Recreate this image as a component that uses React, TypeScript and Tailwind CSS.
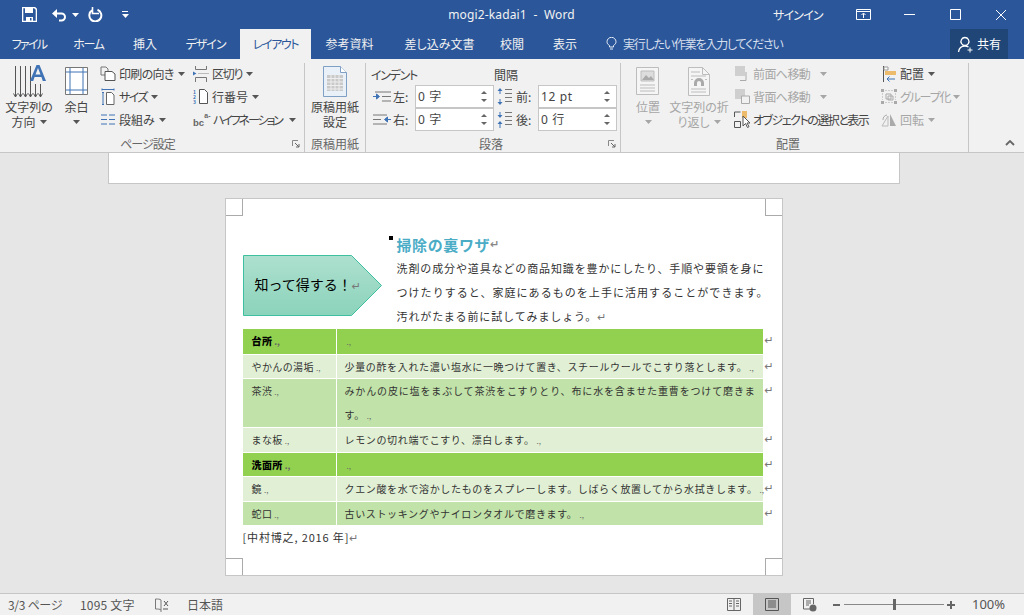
import type { ReactNode } from "react";

const BLUE = "#2b579a";
const ICON_BLUE = "#3f73b5";
const GRAY = "#7a7a7a";
const DIM = "#bdbdbd";

function Caret({ color = "#555", className = "" }: { color?: string; className?: string }) {
  return (
    <svg width="7" height="4" viewBox="0 0 7 4" className={className}>
      <path d="M0 0h7L3.5 4z" fill={color} />
    </svg>
  );
}

function Mark({ className = "" }: { className?: string }) {
  return (
    <span className={`font-['DejaVu_Sans'] text-[11px] leading-none tracking-normal text-[#777] [font-feature-settings:normal] ${className}`}>↵</span>
  );
}

function CellEnd() {
  return <span className="ml-[2px] text-[8px] leading-none tracking-normal text-[#666]">.,</span>;
}

function BigButton({
  width,
  icon,
  lines,
  caret,
  disabled,
}: {
  width: string;
  icon: ReactNode;
  lines: ReactNode[];
  caret?: boolean;
  disabled?: boolean;
}) {
  return (
    <div
      className={`flex shrink-0 flex-col items-center ${width} ${disabled ? "text-[#a6a6a6]" : "text-[#444]"}`}
    >
      <div className="flex h-[36px] items-center justify-center">{icon}</div>
      {lines.map((l, i) => (
        <div key={i} className="flex h-[15px] items-center gap-[4px] whitespace-nowrap text-[12px] leading-[15px]">
          {l}
        </div>
      ))}
      {caret && <Caret color={disabled ? "#a6a6a6" : "#555"} className="mt-[6px]" />}
    </div>
  );
}

function SmallButton({
  icon,
  label,
  caret,
  disabled,
  caretGap = "ml-[1px]",
  tracking = "",
}: {
  icon: ReactNode;
  label: string;
  caret?: boolean;
  disabled?: boolean;
  caretGap?: string;
  tracking?: string;
}) {
  return (
    <div
      className={`flex h-[23px] items-center gap-[3px] whitespace-nowrap text-[12px] ${disabled ? "text-[#a6a6a6]" : "text-[#444]"}`}
    >
      <div className="flex w-[16px] shrink-0 items-center justify-center">{icon}</div>
      <span className={tracking}>{label}</span>
      {caret && <Caret color={disabled ? "#a6a6a6" : "#555"} className={caretGap} />}
    </div>
  );
}

function Launcher() {
  return (
    <svg width="8" height="8" viewBox="0 0 8 8" className="shrink-0">
      <path d="M.5 6V.5H6" fill="none" stroke="#888" />
      <path d="M3 3l4 4M7 4v3H4" fill="none" stroke="#666" />
    </svg>
  );
}

function Group({
  width,
  label,
  launcher,
  children,
  labelClass = "",
}: {
  width: string;
  label: string;
  launcher?: boolean;
  children: ReactNode;
  labelClass?: string;
}) {
  return (
    <div className={`flex h-[89px] shrink-0 flex-col border-r border-[#c6c6c6] ${width}`}>
      <div className="flex h-[73px] min-h-0">{children}</div>
      <div className={`flex h-[16px] items-center text-[12px] leading-none text-[#666] ${labelClass}`}>
        <span className="flex-1 text-center">{label}</span>
        {launcher && <div className="mr-[4px]"><Launcher /></div>}
      </div>
    </div>
  );
}

function Spinner({ value }: { value: string }) {
  return (
    <div className="flex h-[23px] w-[79px] items-center justify-between border border-[#c6c6c6] bg-white pl-[2px] pr-[6px] text-[12px] tracking-[0.6px] text-[#444] [font-feature-settings:normal]">
      <span className="font-['Noto_Sans','Noto_Sans_CJK_JP',sans-serif]">{value}</span>
      <div className="flex flex-col gap-[5px]">
        <svg width="6" height="3" viewBox="0 0 6 3"><path d="M0 3h6L3 0z" fill="#666" /></svg>
        <svg width="6" height="3" viewBox="0 0 6 3"><path d="M0 0h6L3 3z" fill="#666" /></svg>
      </div>
    </div>
  );
}

const Lines3 = () => (
  <g stroke="#777">
    <path d="M8 1.500h7M8 5.500h7M8 9.500h7" />
  </g>
);

function Row({
  bg,
  h,
  first,
  second,
  bold,
}: {
  bg: string;
  h: string;
  first: string;
  second?: ReactNode;
  bold?: boolean;
}) {
  return (
    <div className={`flex ${h} gap-[1px]`}>
      <div className={`w-[93px] shrink-0 pl-[9px] pt-[4px] text-[10px] leading-[16px] tracking-[0.4px] text-[#333] ${bg} ${bold ? "font-black text-black" : ""}`}>
        {first}
        <CellEnd />
      </div>
      <div className={`w-[426px] shrink-0 pl-[8px] pt-[4px] text-[10px] leading-[16px] tracking-[0.65px] text-[#333] ${bg}`}>
        {second}
        <CellEnd />
      </div>
      <div className="flex w-[12px] shrink-0 pl-[1px] pt-[6px]"><Mark /></div>
    </div>
  );
}

function Corner({ className }: { className: string }) {
  return <div className={`absolute h-[17px] w-[17px] border-[#aaa] ${className}`} />;
}

export default function App() {
  return (
    <div className="flex h-[615px] w-[1024px] flex-col overflow-hidden bg-[#e6e6e6] font-['Noto_Sans_CJK_JP','Noto_Sans',sans-serif]">
      {/* title bar */}
      <div className="flex h-[29px] shrink-0 items-center text-white [font-feature-settings:'palt']" style={{ backgroundColor: BLUE }}>
        <div className="flex w-[260px] items-center pl-[22px]">
          <svg width="15" height="15" viewBox="0 0 15 15">
            <path d="M.5.5h12l2 2v12H.5z" fill="none" stroke="#fff" strokeWidth="1.600" />
            <path d="M3 1h8v5H3zM4 10h7v4H4z" fill="#fff" />
            <path d="M8 11h1.500v2.500H8z" fill={BLUE} />
          </svg>
          <svg width="16" height="14" viewBox="0 0 16 14" className="ml-[14px]">
            <path d="M3 5.500h7.500a3.500 3.500 0 0 1 0 7H8" fill="none" stroke="#fff" strokeWidth="2" />
            <path d="M1 5.500L6 1v9z" fill="#fff" />
          </svg>
          <Caret color="#fff" className="ml-[5px]" />
          <svg width="15" height="15" viewBox="0 0 15 15" className="ml-[9px]">
            <path d="M9.500 2.800A6 6 0 1 1 4 3.400" fill="none" stroke="#fff" strokeWidth="2" />
            <path d="M4.500 0v6.500H11" fill="none" stroke="#fff" strokeWidth="1.600" />
          </svg>
          <svg width="7" height="7" viewBox="0 0 7 7" className="ml-[19px]">
            <path d="M0 0h6v1H0zM0 3h7L3.500 7z" fill="#fff" />
          </svg>
        </div>
        <div className="w-[503px] whitespace-pre text-center font-['Noto_Sans','Noto_Sans_CJK_JP',sans-serif] text-[12px] tracking-[0.15px] text-[#f2f2f2]">
          mogi2-kadai1  -  Word
        </div>
        <div className="ml-[10px] w-[53px] whitespace-nowrap text-[12px] tracking-[-0.8px] text-[#f2f2f2]">サインイン</div>
        <div className="flex flex-1 items-center">
          <svg width="15" height="11" viewBox="0 0 15 11" className="ml-[30px]">
            <path d="M.5.5h14v10H.5zM1 2.500h13" fill="none" stroke="#fff" />
            <path d="M7.500 9V4.500M5.500 6l2-2 2 2" fill="none" stroke="#fff" />
          </svg>
          <svg width="11" height="1" viewBox="0 0 11 1" className="ml-[33px]"><path d="M0 0h11v1H0z" fill="#fff" /></svg>
          <svg width="11" height="11" viewBox="0 0 11 11" className="ml-[35px]">
            <path d="M.5.5h10v10H.5z" fill="none" stroke="#fff" />
          </svg>
          <svg width="12" height="12" viewBox="0 0 12 12" className="ml-[34px]">
            <path d="M1 1l10 10M11 1L1 11" fill="none" stroke="#fff" />
          </svg>
        </div>
      </div>

      {/* tabs */}
      <div className="flex h-[30px] shrink-0 items-stretch text-[12px] text-[#f1f1f1] [font-feature-settings:'palt']" style={{ backgroundColor: BLUE }}>
        <div className="flex w-[58px] items-center justify-center tracking-[-1.7px]">ファイル</div>
        <div className="flex w-[61px] items-center justify-center tracking-[-1.3px]">ホーム</div>
        <div className="flex w-[52px] items-center justify-center">挿入</div>
        <div className="flex w-[69px] items-center justify-center tracking-[-1px]">デザイン</div>
        <div className="flex w-[71px] items-center justify-center bg-[#f1f1f1] tracking-[-1.4px] text-[#2b579a]">レイアウト</div>
        <div className="flex w-[77px] items-center justify-center">参考資料</div>
        <div className="flex w-[103px] items-center justify-center">差し込み文書</div>
        <div className="flex w-[42px] items-center justify-center">校閲</div>
        <div className="flex w-[64px] items-center justify-center">表示</div>
        <div className="flex w-[353px] items-center pl-[9px] tracking-[-1.200px] text-[#d5deec]">
          <svg width="11" height="14" viewBox="0 0 11 14" className="mr-[6px]">
            <path d="M3.500 10V8.500C1.800 7.500 1 6.200 1 4.800a4.500 4.500 0 0 1 9 0c0 1.400-.8 2.700-2.500 3.700V10zM4 12h3" fill="none" stroke="#e6ecf5" />
          </svg>
          実行したい作業を入力してください
        </div>
        <div className="flex w-[58px] items-center justify-center gap-[3px] bg-[#1f4677] text-white">
          <svg width="17" height="17" viewBox="0 0 17 17">
            <path d="M8 9.500a4 4 0 1 0-.1 0zM1.500 16c.5-3.500 3-6 6.500-6 1.500 0 2.500.4 3.500 1" fill="none" stroke="#fff" strokeWidth="1.300" />
            <path d="M13 11.500v5M10.500 14h5" stroke="#fff" />
          </svg>
          共有
        </div>
        <div className="flex-1" />
      </div>

      {/* ribbon */}
      <div className="flex h-[94px] shrink-0 border-b border-[#c6c6c6] bg-[#f1f1f1] pt-[4px] [font-feature-settings:'palt']">
        <Group width="w-[305px]" label="ページ設定" launcher labelClass="pl-[3px] tracking-[-1px]">
          <div className="flex w-full">
            <BigButton
              width="w-[57px] pl-[1px]"
              lines={["文字列の", <>方向<Caret /></>]}
              icon={
                <svg width="33" height="33" viewBox="0 0 33 33">
                  <g stroke="#555" fill="none">
                    <path d="M2.500 1v31M7.500 1v31M12.500 1v31M17.500 1v31M22.500 19v13M27.500 19v13" />
                    <path d="M.5 28.500l2 3.500 2-3.500M5.500 28.500l2 3.500 2-3.500M10.500 28.500l2 3.500 2-3.500M15.500 28.500l2 3.500 2-3.500M20.500 28.500l2 3.500 2-3.500M25.500 28.500l2 3.500 2-3.500" />
                  </g>
                  <path d="M17 16L23.500 0h3L33 16h-3.200l-1.400-4h-6.800l-1.400 4zM22.500 9.500h5L25 3z" fill={ICON_BLUE} fillRule="evenodd" />
                </svg>
              }
            />
            <BigButton
              width="ml-[3px] w-[33px]"
              lines={["余白"]}
              caret
              icon={
                <svg width="24" height="28" viewBox="0 0 24 28">
                  <path d="M.5.5h22v27H.5z" fill="#fff" stroke="#777" />
                  <path d="M5 1v26M18 1v26M1 5h21M1 23h21" stroke={ICON_BLUE} fill="none" />
                </svg>
              }
            />
            <div className="ml-[7px] mt-[-1px] flex w-[93px] shrink-0 flex-col">
              <SmallButton
                label="印刷の向き"
                caret
                tracking="tracking-[-0.7px]"
                icon={
                  <svg width="16" height="15" viewBox="0 0 16 15">
                    <path d="M7 9H1V1h5l2 2v2" fill="none" stroke="#777" />
                    <path d="M5 5.500h7l3 2.500v6.500H5z" fill="#fff" stroke="#555" />
                  </svg>
                }
              />
              <SmallButton
                label="サイズ"
                caret
                tracking="tracking-[-1.6px]"
                icon={
                  <svg width="14" height="17" viewBox="0 0 14 17">
                    <path d="M1 1.500h12M1 .5v2M13 .5v2M2 4.500v12M1 4.500h2M1 16.500h2" stroke={ICON_BLUE} fill="none" />
                    <path d="M5.500 4.500h5l2.500 2.500v9.500H5.500z" fill="#fff" stroke="#666" />
                  </svg>
                }
              />
              <SmallButton
                label="段組み"
                caret
                icon={
                  <svg width="14" height="11" viewBox="0 0 14 11">
                    <path d="M0 1h6M8 1h6M0 5.500h6M8 5.500h6M0 10h6M8 10h6" stroke={ICON_BLUE} fill="none" />
                  </svg>
                }
              />
            </div>
            <div className="mt-[-1px] flex flex-col">
              <SmallButton
                label="区切り"
                caret
                tracking="tracking-[-1.2px]"
                icon={
                  <svg width="16" height="16" viewBox="0 0 16 16">
                    <path d="M2.500 0v3.500h11V0M2.500 16v-4.500h11V16" fill="none" stroke="#777" />
                    <path d="M0 5.500L3.500 7.500 0 9.500z" fill={ICON_BLUE} />
                    <path d="M5 7.500h11" stroke="#bbb" />
                  </svg>
                }
              />
              <SmallButton
                label="行番号"
                caret
                icon={
                  <svg width="16" height="15" viewBox="0 0 16 15">
                    <text x="0" y="5" fontSize="5" fill={ICON_BLUE} fontWeight="700">1</text>
                    <text x="0" y="10" fontSize="5" fill={ICON_BLUE} fontWeight="700">2</text>
                    <text x="0" y="15" fontSize="5" fill={ICON_BLUE} fontWeight="700">3</text>
                    <path d="M6.500.5h5l3 3v11h-8z" fill="#fff" stroke="#555" />
                  </svg>
                }
              />
              <div className="flex h-[23px] items-center whitespace-nowrap text-[12px] text-[#444]">
                <svg width="18" height="16" viewBox="0 0 18 16" className="shrink-0 font-['Liberation_Sans',sans-serif]">
                  <text x="0" y="14" fontSize="9.500" fontWeight="700" fill="#666">bc</text>
                  <text x="11.300" y="6" fontSize="7" fontWeight="700" fill="#666">a-</text>
                </svg>
                <span className="ml-[2px] tracking-[-2.100px]">ハイフネーション</span>
                <Caret className="ml-[7px]" />
              </div>
            </div>
          </div>
        </Group>

        <Group width="w-[61px]" label="原稿用紙">
          <BigButton
            width="w-[60px]"
            lines={["原稿用紙", "設定"]}
            icon={
              <svg width="24" height="31" viewBox="0 0 24 31">
                <path d="M.5.5h17l6 6v24H.5z" fill="#eaf0f7" stroke="#7f9fc4" />
                <path d="M17.500.5v6h6" fill="#fff" stroke="#7f9fc4" />
                <path d="M4 9h16v16H4z" fill="#c9c9c9" />
                <path d="M4 12.500h16M4 16h16M4 19.500h16M4 23h16M8 9v16M12 9v16M16 9v16" stroke="#eee" />
              </svg>
            }
          />
        </Group>

        <Group width="w-[255px]" label="段落" launcher labelClass="pl-[8px]">
          <div className="flex w-full flex-col pl-[5px]">
            <div className="flex h-[22px] items-center pt-[1px] text-[12px] text-[#444]">
              <span className="w-[123px] tracking-[-1.300px]">インデント</span>
              <span>間隔</span>
            </div>
            <div className="flex flex-col">
              <div className="flex items-center">
                <svg width="18" height="11" viewBox="0 0 18 11" className="ml-[2px]">
                  <path d="M2 1h16M9 5.500h9M9 10h9" stroke="#777" fill="none" />
                  <path d="M0 5.500h5M3.500 3l3 2.500-3 2.500z" stroke={ICON_BLUE} fill={ICON_BLUE} />
                </svg>
                <span className="ml-[2px] w-[22px] text-[12px] text-[#444]">左:</span>
                <Spinner value="0 字" />
                <svg width="16" height="18" viewBox="0 0 16 18" className="ml-[3px]">
                  <Lines3 />
                  <path d="M3 0L.5 3h2v3h1V3h2zM3 17L.5 14h2v-3h1v3h2z" fill={ICON_BLUE} />
                  <path d="M8 13.500h7" stroke="#777" />
                </svg>
                <span className="ml-[3px] w-[22px] text-[12px] text-[#444]">前:</span>
                <Spinner value="12 pt" />
              </div>
              <div className="flex items-center">
                <svg width="18" height="11" viewBox="0 0 18 11" className="ml-[2px]">
                  <path d="M0 1h14M0 5.500h8M0 10h14" stroke="#777" fill="none" />
                  <path d="M12 5.500h6M14.500 3l-3 2.500 3 2.500z" stroke={ICON_BLUE} fill={ICON_BLUE} />
                </svg>
                <span className="ml-[2px] w-[22px] text-[12px] text-[#444]">右:</span>
                <Spinner value="0 字" />
                <svg width="16" height="18" viewBox="0 0 16 18" className="ml-[3px]">
                  <Lines3 />
                  <path d="M3 7L.5 4h2V1h1v3h2zM3 10L.5 13h2v4h1v-4h2z" fill={ICON_BLUE} />
                  <path d="M8 13.500h7" stroke="#777" />
                </svg>
                <span className="ml-[3px] w-[22px] text-[12px] text-[#444]">後:</span>
                <Spinner value="0 行" />
              </div>
            </div>
          </div>
        </Group>

        <Group width="w-[348px]" label="配置" labelClass="pr-[13px]">
          <div className="flex w-full">
            <BigButton
              width="w-[53px] pl-[1px]"
              disabled
              lines={["位置"]}
              caret
              icon={
                <svg width="24" height="29" viewBox="0 0 24 29">
                  <path d="M.5.5h22v27H.5z" fill="#f5f5f5" stroke={DIM} />
                  <path d="M5 4h13v10H5z" fill="#ddd" stroke={DIM} />
                  <path d="M6 13l4-5 3 3 2-2 3 4z" fill="#aaa" />
                  <path d="M4 18h15M4 21h15M4 24h15" stroke={DIM} />
                </svg>
              }
            />
            <BigButton
              width="w-[50px]"
              disabled
              lines={["文字列の折", <>り返し<Caret color="#a6a6a6" /></>]}
              icon={
                <svg width="22" height="29" viewBox="0 0 22 29">
                  <path d="M.5.5h14l7 7v21H.5z" fill="#f5f5f5" stroke={DIM} />
                  <path d="M14.500.5v7h7" fill="none" stroke={DIM} />
                  <path d="M6 19v-3a5 5 0 0 1 10 0v3h-3v-3a2 2 0 0 0-4 0v3z" fill="#aaa" />
                  <path d="M3 5h9M3 9h15M3 12.500h2M17 12.500h2M3 22h15M3 25h15" stroke={DIM} />
                </svg>
              }
            />
            <div className="ml-[10px] mt-[-1px] flex w-[147px] shrink-0 flex-col">
              <SmallButton
                label="前面へ移動"
                caret
                disabled
                tracking="tracking-[-0.6px]"
                caretGap="ml-[7px]"
                icon={
                  <svg width="15" height="15" viewBox="0 0 15 15">
                    <path d="M0 0h10v10H0z" fill="#cfcfcf" />
                    <path d="M11 6v8.500H5" fill="none" stroke="#aaa" />
                  </svg>
                }
              />
              <SmallButton
                label="背面へ移動"
                caret
                disabled
                tracking="tracking-[-0.6px]"
                caretGap="ml-[7px]"
                icon={
                  <svg width="15" height="15" viewBox="0 0 15 15">
                    <path d="M0 0h10v10H0z" fill="#cfcfcf" />
                    <path d="M6.500 7h8v7.500h-8z" fill="#f1f1f1" stroke="#aaa" />
                  </svg>
                }
              />
              <div className="flex h-[23px] items-center whitespace-nowrap text-[12px] text-[#444]">
                <svg width="17" height="17" viewBox="0 0 17 17" className="shrink-0">
                  <path d="M.5 1h6M.5 1v5M.5 10.500h6v6h-6z" fill="none" stroke="#555" />
                  <path d="M8 0h5v7H8z" fill="#edbb6c" />
                  <path d="M9 5v10l2.500-2.500 2 4 1.500-.8-2-3.700h3z" fill="#fff" stroke="#555" />
                </svg>
                <span className="ml-[2px] tracking-[-1.500px]">オブジェクトの選択と表示</span>
              </div>
            </div>
            <div className="mt-[-1px] flex flex-col">
              <SmallButton
                label="配置"
                caret
                icon={
                  <svg width="14" height="16" viewBox="0 0 14 16">
                    <path d="M1.500 0v16" stroke="#555" />
                    <path d="M2 1h4v3H2z" fill="#fff" stroke="#999" />
                    <path d="M3 5h11v4H3z" fill="#edbb6c" />
                    <path d="M13 13H5M7.500 10.500L5 13l2.500 2.500" fill="none" stroke={ICON_BLUE} />
                  </svg>
                }
              />
              <SmallButton
                label="グループ化"
                caret
                disabled
                tracking="tracking-[-1.200px]"
                caretGap="ml-0"
                icon={
                  <svg width="16" height="15" viewBox="0 0 16 15">
                    <path d="M0 0h3v3H0zM13 0h3v3h-3zM0 12h3v3H0zM13 12h3v3h-3z" fill="#aaa" />
                    <path d="M5 5h5v5H5z M7 7h5v4H7z" fill="none" stroke="#aaa" />
                    <path d="M4 1.500h8M4 13.500h8M1.500 4v7M14.500 4v7" stroke="#ccc" strokeDasharray="2 1" />
                  </svg>
                }
              />
              <SmallButton
                label="回転"
                caret
                disabled
                icon={
                  <svg width="16" height="14" viewBox="0 0 16 14">
                    <path d="M9 13V1l6 12z" fill="#aaa" />
                    <path d="M7 3v10H1z" fill="none" stroke="#bbb" />
                    <path d="M2 7a5 5 0 0 1 4-5" fill="none" stroke="#aaa" />
                  </svg>
                }
              />
            </div>
          </div>
        </Group>

        <div className="flex flex-1 items-end justify-end pb-[6px] pr-[9px]">
          <svg width="10" height="6" viewBox="0 0 10 6">
            <path d="M1 5l4-4 4 4" fill="none" stroke="#666" strokeWidth="1.800" />
          </svg>
        </div>
      </div>

      {/* document area */}
      <div className="flex min-h-0 flex-1 flex-col items-center">
        <div className="ml-[-17px] h-[31px] w-[792px] shrink-0 border border-t-0 border-[#c6c6c6] bg-white" />
        <div className="relative ml-[-17px] mt-[14px] h-[378px] w-[558px] shrink-0 border border-[#c6c6c6] bg-white pl-[17px] pt-[36px]">
          <Corner className="left-0 top-0 border-b border-r" />
          <Corner className="right-0 top-0 border-b border-l" />
          <Corner className="bottom-0 left-0 border-r border-t" />
          <Corner className="bottom-0 right-0 border-l border-t" />
          <div className="absolute left-[163px] top-[37px] h-[4px] w-[4px] bg-black" />

          <div className="flex h-[94px]">
            <div className="relative mt-[20px] flex h-[61px] w-[139px] shrink-0 items-center pl-[12px]">
              <svg width="139" height="61" viewBox="0 0 139 61" className="absolute inset-0">
                <defs>
                  <linearGradient id="pent" x1="0" y1="0" x2="0" y2="1">
                    <stop offset="0" stopColor="#aee0cf" />
                    <stop offset="1" stopColor="#8bd3bb" />
                  </linearGradient>
                </defs>
                <path d="M.5.5h108l30 30-30 30H.5z" fill="url(#pent)" stroke="#3ebf9f" />
              </svg>
              <span className="relative mt-[-2px] whitespace-nowrap text-[14px] leading-none text-black">
                知って得する！<Mark />
              </span>
            </div>
            <div className="ml-[15px] flex flex-col">
              <div className="mt-[-2px] flex h-[22px] items-center whitespace-nowrap text-[15px] font-bold leading-none tracking-[0.6px] text-[#4bacc6]">
                掃除の裏ワザ<Mark className="text-[#888]" />
              </div>
              <div className="whitespace-nowrap text-[11px] leading-[24px] tracking-[0.88px] text-[#333]">
                <div className="mt-[1px]">洗剤の成分や道具などの商品知識を豊かにしたり、手順や要領を身に</div>
                <div className="tracking-[1.05px]">つけたりすると、家庭にあるものを上手に活用することができます。</div>
                <div>汚れがたまる前に試してみましょう。<Mark /></div>
              </div>
            </div>
          </div>

          <div className="flex flex-col gap-[1px] whitespace-nowrap">
            <Row bg="bg-[#92d14f]" h="h-[25px]" first="台所" bold />
            <Row bg="bg-[#e1f0d5]" h="h-[23px]" first="やかんの湯垢" second="少量の酢を入れた濃い塩水に一晩つけて置き、スチールウールでこすり落とします。" />
            <Row
              bg="bg-[#c1e2a8]"
              h="h-[48px]"
              first="茶渋"
              second={
                <>
                  <div className="mt-[-4px] leading-[24px] tracking-[0.85px]">みかんの皮に塩をまぶして茶渋をこすりとり、布に水を含ませた重曹をつけて磨きま</div>
                  <span className="leading-[24px]">す。</span>
                </>
              }
            />
            <Row bg="bg-[#e1f0d5]" h="h-[24px]" first="まな板" second="レモンの切れ端でこすり、漂白します。" />
            <Row bg="bg-[#92d14f]" h="h-[23px]" first="洗面所" bold />
            <Row bg="bg-[#e1f0d5]" h="h-[24px]" first="鏡" second="クエン酸を水で溶かしたものをスプレーします。しばらく放置してから水拭きします。" />
            <Row bg="bg-[#c1e2a8]" h="h-[23px]" first="蛇口" second="古いストッキングやナイロンタオルで磨きます。" />
          </div>
          <div className="mt-[3px] whitespace-nowrap text-[11px] leading-[18px] tracking-[0.85px] text-[#333]">
            [中村博之, 2016 年]<Mark />
          </div>
        </div>
      </div>

      {/* status bar */}
      <div className="flex h-[22px] shrink-0 items-center border-t border-[#c6c6c6] bg-[#f1f1f1] pl-[8px] text-[12px] text-[#555] [font-feature-settings:'palt']">
        <span className="w-[72px] tracking-[-0.3px]">3/3 ページ</span>
        <span className="w-[75px] tracking-[0.2px]">1095 文字</span>
        <svg width="14" height="14" viewBox="0 0 14 14" className="shrink-0">
          <path d="M6 2C5 1 3 1 .5 1v10C3 11 5 11 6 12V2zM6 12v2" fill="none" stroke={GRAY} />
          <path d="M9 3l4 5M13 3L9 8M8 11h5" stroke="#555" fill="none" />
        </svg>
        <span className="ml-[18px]">日本語</span>
        <div className="flex-1" />
        <div className="flex h-full w-[38px] items-center justify-center">
          <svg width="14" height="13" viewBox="0 0 14 13">
            <path d="M.5.5h13v12H.5zM7 .5v12M2 3h3M2 5.500h3M2 8h3M9 3h3M9 5.500h3M9 8h3" fill="none" stroke="#666" />
          </svg>
        </div>
        <div className="flex h-full w-[38px] items-center justify-center bg-[#c6c6c6]">
          <svg width="14" height="13" viewBox="0 0 14 13">
            <path d="M.5.5h13v12H.5zM3 3h8M3 5h8M3 7h8M3 9h8" fill="none" stroke="#555" />
          </svg>
        </div>
        <div className="flex h-full w-[38px] items-center justify-center">
          <svg width="14" height="14" viewBox="0 0 14 14">
            <path d="M8 11H.5V.5h10V6M3 3h5M3 5h5M3 7h3" fill="none" stroke="#666" />
            <circle cx="10" cy="10" r="3.500" fill="#666" />
          </svg>
        </div>
        <svg width="7" height="2" viewBox="0 0 7 2" className="ml-[4px]"><path d="M0 0h7v2H0z" fill="#666" /></svg>
        <div className="relative ml-[4px] h-[1px] w-[100px] bg-[#888]">
          <div className="absolute left-[49px] top-[-5px] h-[11px] w-[3px] bg-[#666]" />
        </div>
        <svg width="8" height="8" viewBox="0 0 8 8" className="ml-[3px]"><path d="M3 0h2v3h3v2H5v3H3V5H0V3h3z" fill="#666" /></svg>
        <span className="ml-[17px] w-[52px] font-['Noto_Sans',sans-serif] text-[13px]">100%</span>
      </div>
    </div>
  );
}
